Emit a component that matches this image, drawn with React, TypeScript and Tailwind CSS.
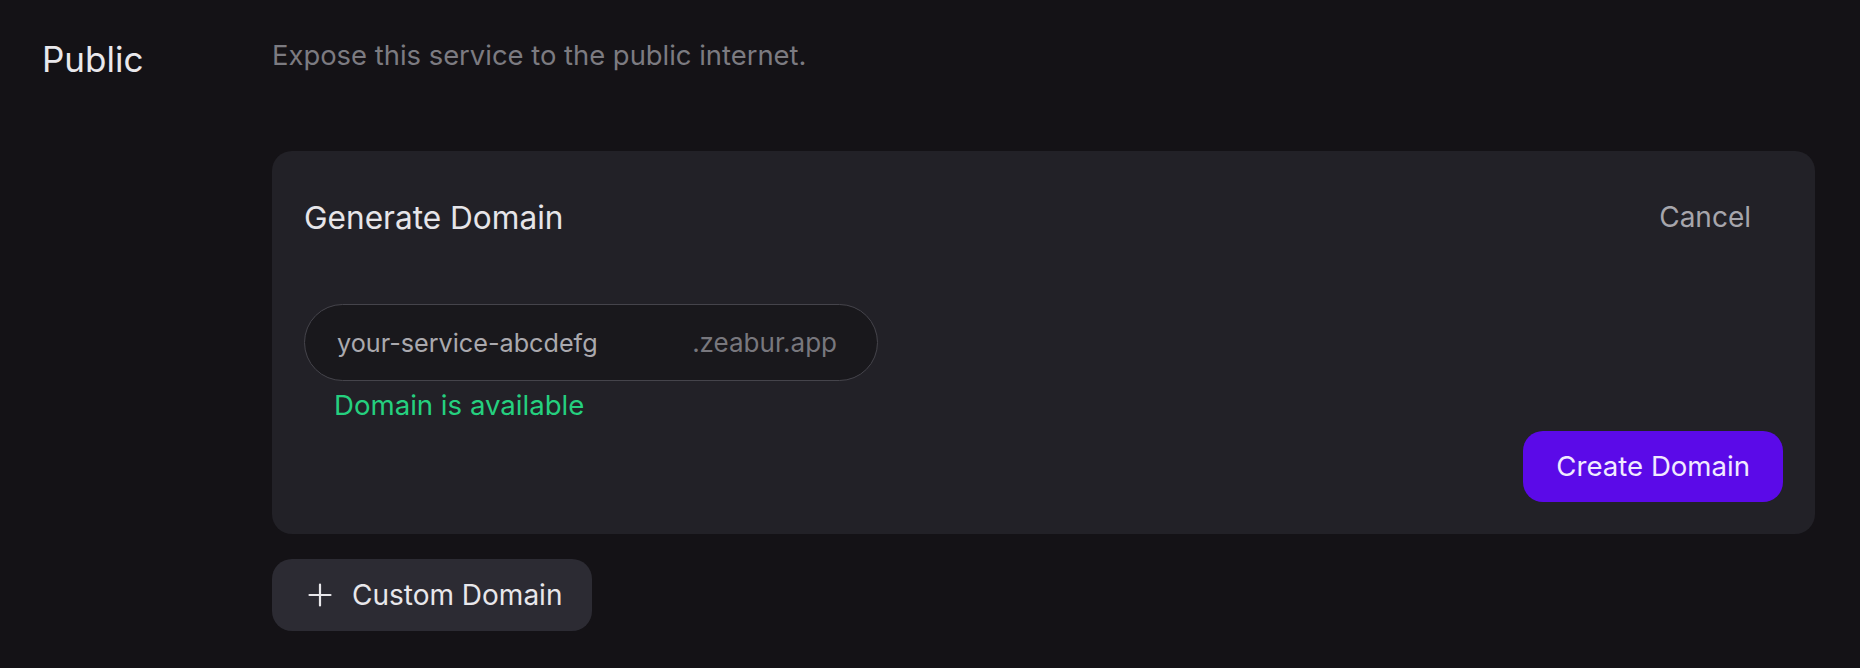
export default function App() {
  return (
    <div className="min-h-screen w-full bg-[#141216] pl-[42px] pr-[45px] pt-[42px] font-['Inter','Noto_Sans',sans-serif] text-[#e6e5e9]">
      <div className="flex items-start">
        <div className="w-[230px] shrink-0 text-[35px] leading-none text-[#e9e8ec]">Public</div>
        <div className="flex-1">
          <p className="text-[27.4px] leading-none text-[#7c7b81]">Expose this service to the public internet.</p>

          <GenerateDomainCard />

          <button
            type="button"
            className="mt-[25px] flex h-[72px] w-[320px] items-center justify-start gap-[20px] whitespace-nowrap rounded-[20px] bg-[#2c2b33] pl-[36px] pr-[33px] text-[28px] leading-none text-[#e8e7eb]"
          >
            <PlusIcon />
            <span>Custom Domain</span>
          </button>
        </div>
      </div>
    </div>
  );
}

function GenerateDomainCard() {
  return (
    <div className="mt-[82px] rounded-[20px] bg-[#222127] px-8 pb-8 pt-[50px]">
      <div className="flex h-[32px] items-center justify-between">
        <h2 className="text-[31.6px] font-normal leading-none text-[#e6e5e9]">Generate Domain</h2>
        <button type="button" className="px-8 text-[28px] leading-none text-[#a7a6ac]">
          Cancel
        </button>
      </div>

      <div className="mt-[71px] flex h-[77px] w-[574px] items-center rounded-full border border-[#45444b] bg-[#19181c] pl-8 pr-[40px]">
        <input
          className="min-w-0 flex-1 bg-transparent text-[25.2px] leading-none text-[#aaa9ae] outline-none"
          defaultValue="your-service-abcdefg"
        />
        <span className="text-[26px] leading-none text-[#78777d]">.zeabur.app</span>
      </div>

      <div className="ml-[30px] mt-[11px] text-[27.6px] leading-none text-[#25d07f]">Domain is available</div>

      <div className="mt-[11px] flex justify-end">
        <button
          type="button"
          className="h-[71px] whitespace-nowrap rounded-[20px] bg-[#5b0ae8] px-[33px] text-[27.6px] leading-none text-[#f1eaff]"
        >
          Create Domain
        </button>
      </div>
    </div>
  );
}

function PlusIcon() {
  return (
    <svg width="24" height="24" viewBox="0 0 24 24" fill="none" stroke="currentColor" strokeWidth="2.2" strokeLinecap="round" className="shrink-0">
      <path d="M12 1.5v21M1.5 12h21" />
    </svg>
  );
}
